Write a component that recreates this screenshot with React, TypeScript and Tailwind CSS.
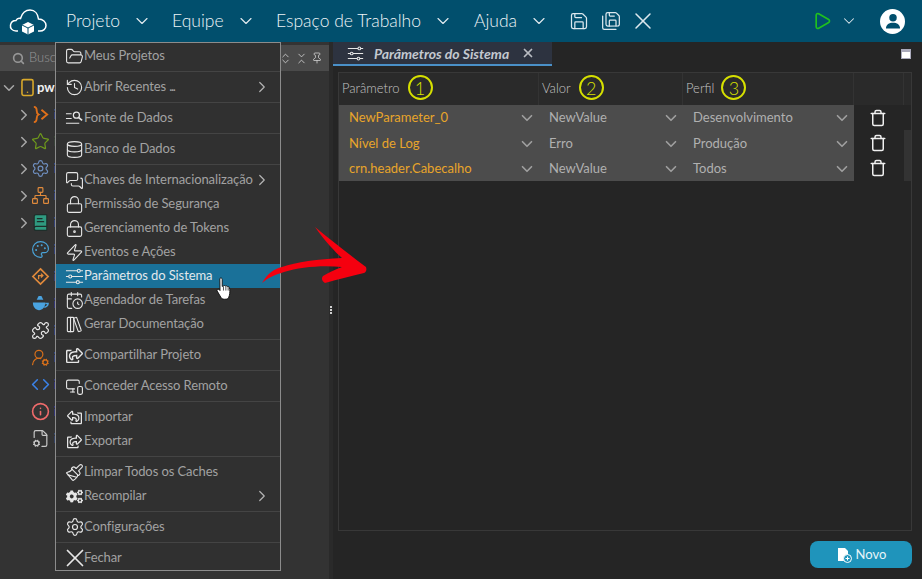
import React from "react";
import {
  ChevronDown, ChevronRight, Search, FolderOpen, History, Database, MessagesSquare, Lock, Zap,
  CalendarClock, LibraryBig, MonitorSmartphone, Paintbrush, Settings, X, Save, SaveAll, Play, Trash,
  Smartphone, Star, Network, BookText, Palette, Puzzle, Code, Info, FileCog, UserRoundCog, LockKeyhole, Pin, ChevronsDownUp, ChevronsUpDown, Locate,
} from "lucide-react";
import { FaCogs, FaRegShareSquare } from "react-icons/fa";

const F = "font-['Lato','Noto_Sans',sans-serif]";

function Sliders({ size = 18, className = "" }: { size?: number; className?: string }) {
  return (
    <svg viewBox="0 0 20 20" width={size} height={size} className={className} fill="none" stroke="currentColor" strokeWidth="1.2">
      <path d="M1 4 H13 M16 4 H19 M1 10 H4 M7 10 H19 M1 16 H12 M15 16 H19" />
      <circle cx="14.5" cy="4" r="1.6" />
      <circle cx="5.5" cy="10" r="1.6" />
      <circle cx="13.5" cy="16" r="1.6" />
    </svg>
  );
}

function ListSearch({ size = 18, className = "" }: { size?: number; className?: string }) {
  return (
    <svg viewBox="0 0 20 20" width={size} height={size} className={className} fill="none" stroke="currentColor" strokeWidth="1.3">
      <path d="M1 5 H7 M1 10 H7 M1 15 H15" />
      <circle cx="12" cy="6.5" r="3.2" />
      <path d="M14.5 9 L18 12" strokeWidth="1.8" />
    </svg>
  );
}

const Imp = (p: { size?: number; className?: string }) => <FaRegShareSquare size={p.size} className={`-scale-x-100 ${p.className}`} />;
const Exp = (p: { size?: number; className?: string }) => <FaRegShareSquare size={p.size} className={p.className} />;

type MI = { icon: React.ElementType; size?: number; label: React.ReactNode; key: string; sub?: boolean; active?: boolean };
const groups: MI[][] = [
  [{ icon: FolderOpen, key: "a", label: "Meus Projetos" }],
  [{ icon: History, key: "b", label: <>Abrir Recentes <span className="tracking-[-1.4px]">...</span></>, sub: true }],
  [{ icon: ListSearch, key: "c", label: "Fonte de Dados" }],
  [{ icon: Database, key: "d", label: "Banco de Dados" }],
  [
    { icon: MessagesSquare, key: "e", label: "Chaves de Internacionalização", sub: true },
    { icon: Lock, key: "f", label: "Permissão de Segurança" },
    { icon: LockKeyhole, key: "g", label: "Gerenciamento de Tokens" },
    { icon: Zap, key: "h", label: "Eventos e Ações" },
    { icon: Sliders, key: "i", label: "Parâmetros do Sistema", active: true },
    { icon: CalendarClock, key: "j", label: "Agendador de Tarefas" },
    { icon: LibraryBig, key: "k", label: "Gerar Documentação" },
  ],
  [{ icon: Exp, size: 17, key: "l", label: "Compartilhar Projeto" }],
  [{ icon: MonitorSmartphone, key: "m", label: "Conceder Acesso Remoto" }],
  [
    { icon: Imp, size: 15, key: "n", label: "Importar" },
    { icon: Exp, size: 15, key: "o", label: "Exportar" },
  ],
  [
    { icon: Paintbrush, key: "p", label: "Limpar Todos os Caches" },
    { icon: FaCogs, size: 17, key: "q", label: "Recompilar", sub: true },
  ],
  [{ icon: Settings, size: 20, key: "r", label: "Configurações" }],
  [{ icon: X, size: 30, key: "s", label: "Fechar" }],
];

function Braces({ size = 19, className = "" }: { size?: number; className?: string }) {
  return (
    <svg viewBox="0 0 20 20" width={size} height={size} className={className} fill="none" stroke="currentColor" strokeWidth="2">
      <path d="M3 2 C6 2 6 4 6 6 C6 8 6 9 8 10 C6 11 6 12 6 14 C6 16 6 18 3 18" />
      <path d="M11 5 L17 10 L11 15" />
    </svg>
  );
}
function Turn({ size = 19, className = "" }: { size?: number; className?: string }) {
  return (
    <svg viewBox="0 0 20 20" width={size} height={size} className={className} fill="none" stroke="currentColor" strokeWidth="1.8">
      <path d="M10 2 L18 10 L10 18 L2 10 Z" />
      <path d="M8 13 V9 H12 M10.5 7 L12.5 9 L10.5 11" strokeWidth="1.4" />
    </svg>
  );
}
function Pot({ size = 19, className = "" }: { size?: number; className?: string }) {
  return (
    <svg viewBox="0 0 20 20" width={size} height={size} className={className} fill="currentColor">
      <path d="M8 2 h3 l2 4 H6 z" />
      <path d="M2 9 H15 C15 14 12 17 8.5 17 C5 17 2 14 2 9 Z" />
      <path d="M15 10 h3 c0 2 -2 4 -4 4" fill="none" stroke="currentColor" strokeWidth="1.5" />
    </svg>
  );
}

const tree: { icon: React.ElementType; color: string; chev?: boolean; text: string; sw?: number; fill?: string }[] = [
  { icon: Braces, color: "text-[#e0701a]", chev: true, text: "text-[#3b9fd8]" },
  { icon: Star, color: "text-[#6f9a1c]", chev: true, text: "text-[#d9a441]" },
  { icon: Settings, color: "text-[#6f8fc0]", chev: true, text: "text-[#3b9fd8]" },
  { icon: Network, color: "text-[#e08a3c]", chev: true, text: "text-[#3b9fd8]" },
  { icon: BookText, color: "text-[#1e2e2a]", chev: true, text: "text-[#3b9fd8]", fill: "#2f9a80" },
  { icon: Palette, color: "text-[#4aa3d8]", text: "text-[#3b9fd8]" },
  { icon: Turn, color: "text-[#e08a3c]", text: "text-[#3b9fd8]" },
  { icon: Pot, color: "text-[#4aa3e0]", text: "text-[#4a4ad8]" },
  { icon: Puzzle, color: "text-[#e8e8e8]", text: "text-[#3b9fd8]" },
  { icon: UserRoundCog, color: "text-[#d9701a]", text: "text-[#3b9fd8]" },
  { icon: Code, color: "text-[#3b82e8]", text: "text-[#4a4ad8]", sw: 2 },
  { icon: Info, color: "text-[#ef6b6b]", text: "text-[#4a4ad8]", sw: 2 },
  { icon: FileCog, color: "text-[#c8c8c8]", text: "text-[#aaaaaa]" },
];

const rows = [
  ["NewParameter_0", "NewValue", "Desenvolvimento"],
  ["Nível de Log", "Erro", "Produção"],
  ["crn.header.Cabecalho", "NewValue", "Todos"],
];

function TopItem({ label, w, gap }: { label: string; w: number; gap: number }) {
  return (
    <div className="flex items-center" style={{ width: w }}>
      <span className="text-[17.5px] font-light text-[#eef4f7]">{label}</span>
      <ChevronDown className="shrink-0 text-[#dfe9ee]" size={20} strokeWidth={1.4} style={{ marginLeft: gap }} />
    </div>
  );
}

function Num({ n, ml }: { n: number; ml: number }) {
  return (
    <span
      className="-mt-[3px] flex h-[25px] w-[25px] items-center justify-center rounded-full border-[2.5px] border-[#d6e000] text-[18px] leading-none text-[#d6e000]"
      style={{ marginLeft: ml }}
    >
      {n}
    </span>
  );
}

export default function App() {
  return (
    <div className={`${F} relative flex h-[579px] w-[922px] flex-col overflow-hidden bg-[#252525]`}>
      {/* top bar */}
      <header className="flex h-[42px] shrink-0 items-center bg-[#014f6d]">
        <svg viewBox="0 0 38 28" className="ml-[9px] h-[28px] w-[38px]" fill="none" stroke="#fff" strokeWidth="1.5">
          <path d="M9 24 H7 C3 24 1 21 1.5 18 C2 15 4.5 13.5 7 13.5 C8 11.5 10 11 11.5 11.5 C13 6 17 3 21 3 C26 3 29 7 29.5 12 C34 12 37 15 37 18.5 C37 22 34 24 31 24 H29" />
          <path d="M19 15 l6 3 v6.5 l-6 3 l-6 -3 v-6.5 z" fill="#fff" stroke="none" />
          <path d="M13 18 l6 3 l6 -3 M19 21 v6.5" stroke="#014f6d" strokeWidth="1" />
        </svg>
        <div className="ml-[19px] flex items-center">
          <TopItem label="Projeto" w={106} gap={12} />
          <TopItem label="Equipe" w={104} gap={12} />
          <TopItem label="Espaço de Trabalho" w={198} gap={12} />
          <TopItem label="Ajuda" w={95} gap={12} />
        </div>
        <div className="flex items-center text-[#dce8ee]">
          <Save size={20} strokeWidth={1.5} />
          <SaveAll size={20} strokeWidth={1.5} className="ml-[12px]" />
          <X size={28} strokeWidth={1.3} className="ml-[8px]" />
        </div>
        <Play size={20} strokeWidth={2} className="ml-[155px] text-[#1fc01f]" />
        <ChevronDown size={18} strokeWidth={1.4} className="ml-[8px] text-[#dfe9ee]" />
        <div className="ml-[22px] flex h-[25px] w-[25px] items-center justify-center overflow-hidden rounded-full bg-white">
          <svg viewBox="0 0 24 24" className="h-[20px] w-[20px]" fill="#014f6d">
            <circle cx="12" cy="8" r="4.5" />
            <path d="M3.5 21 c0 -5 4 -7 8.5 -7 s8.5 2 8.5 7 z" />
          </svg>
        </div>
      </header>

      <div className="flex min-h-0 flex-1">
        {/* sidebar */}
        <aside className="flex w-[329px] shrink-0 flex-col bg-[#333333]">
          <div className="mt-[3px] flex h-[26px] items-center justify-between bg-[#4a4a4a] pl-[12px] pr-[6px]">
            <div className="flex items-center gap-[4px] text-[#979797]">
              <Search size={13} strokeWidth={3} />
              <span className="text-[13px] font-light">Buscar</span>
            </div>
            <div className="flex items-center gap-[3px] text-[#d8d8d8]">
              <Locate size={11} strokeWidth={1.5} />
              <ChevronsUpDown size={13} strokeWidth={1.5} />
              <ChevronsDownUp size={13} strokeWidth={1.5} />
              <Pin size={12} strokeWidth={1.5} />
            </div>
          </div>
          <div className="pt-[3px]">
            <div className="flex h-[27px] items-center">
              <ChevronDown size={18} strokeWidth={2} className="shrink-0 text-[#a8a8a8]" />
              <Smartphone size={19} strokeWidth={2} className="shrink-0 text-[#d9a92b]" />
              <span className="text-[13px] font-bold text-[#efefef]">pwa</span>
            </div>
            {tree.map((t, i) => {
              const I = t.icon as React.ElementType;
              return (
                <div key={i} className="flex h-[27px] items-center pl-[17px]">
                  <span className="flex w-[14px] shrink-0 justify-center">
                    {t.chev && <ChevronRight size={18} strokeWidth={2} className="shrink-0 text-[#a8a8a8]" />}
                  </span>
                  <I size={19} strokeWidth={t.sw ?? 1.5} fill={t.fill ?? "none"} className={`shrink-0 ${t.color}`} />
                  <span className={`ml-[4px] text-[13px] ${t.text}`}>item</span>
                </div>
              );
            })}
          </div>
        </aside>

        {/* splitter */}
        <div className="relative flex w-[4px] shrink-0 flex-col items-center justify-center gap-[1px] bg-[#2a2a2a] pb-[2px]">
          <span className="h-[2px] w-[2px] bg-[#cfcfcf]" />
          <span className="h-[2px] w-[2px] bg-[#cfcfcf]" />
          <span className="h-[2px] w-[2px] bg-[#cfcfcf]" />
        </div>

        {/* main */}
        <main className="flex min-w-0 flex-1 flex-col">
          <div className="flex h-[24px] items-stretch">
            <div className="flex w-[219px] items-center border-b-2 border-[#4a90c8] bg-[#2d3340] pl-[14px]">
              <Sliders size={17} className="shrink-0 text-[#e6e6e6]" />
              <span className="ml-[10px] whitespace-nowrap text-[14px] font-bold italic text-[#c4c9d0]">Parâmetros do Sistema</span>
              <X size={14} strokeWidth={3} className="ml-[12px] shrink-0 text-[#b8bcc2]" />
            </div>
            <div className="ml-auto mr-[11px] mt-[7px] h-[10px] w-[10px] border border-[#aab] border-t-[3px] bg-white" />
          </div>

          <div className="mb-[10px] ml-[5px] mr-[10px] mt-[6px] flex min-h-0 flex-1 flex-col border border-[#383838]">
            <div className="flex h-[32px] shrink-0 bg-[#2a2a2a] text-[13px] font-light text-[#c4c4c4]">
              <div className="flex w-[200px] items-center border-r border-[#333] pl-[3px]">Parâmetro<Num n={1} ml={8} /></div>
              <div className="flex w-[144px] items-center border-r border-[#333] pl-[3px]">Valor<Num n={2} ml={8} /></div>
              <div className="flex w-[171px] items-center border-r border-[#333] pl-[3px]">Perfil<Num n={3} ml={7} /></div>
              <div className="w-[50px] border-r border-[#333]" />
            </div>
            {rows.map((r, i) => (
              <div key={i} className="flex h-[25.4px] shrink-0 items-center text-[13px]">
                <div className="flex h-full w-[515px] items-center bg-[#4c4c4c] pt-[1px]">
                  <div className="flex w-[200px] items-center justify-between pl-[10px] pr-[3px] text-[#e8a52a]">
                    <span>{r[0]}</span>
                    <ChevronDown size={18} strokeWidth={2.2} className="text-[#a0a0a0]" />
                  </div>
                  <div className="flex w-[144px] items-center justify-between pl-[10px] pr-[3px] text-[#b0b0b0]">
                    <span>{r[1]}</span>
                    <ChevronDown size={18} strokeWidth={2.2} className="text-[#a0a0a0]" />
                  </div>
                  <div className="flex w-[171px] items-center justify-between pl-[10px] pr-[3px] text-[#b0b0b0]">
                    <span>{r[2]}</span>
                    <ChevronDown size={18} strokeWidth={2.2} className="text-[#a0a0a0]" />
                  </div>
                </div>
                <div className="flex w-[50px] justify-center pr-[2px]">
                  <Trash size={18} strokeWidth={2} className="text-[#f0f0f0]" />
                </div>
                <div className={`h-full flex-1 ${i > 0 ? "bg-[#333333]" : ""}`} />
              </div>
            ))}
          </div>

          <div className="mb-[11px] mr-[10px] flex justify-end">
            <button className="flex h-[27px] w-[102px] items-center justify-center gap-[4px] rounded-[8px] bg-[#1f94bb] text-[13px] text-[#e6f4f9]">
              <svg viewBox="0 0 16 16" className="h-[16px] w-[16px]">
                <path d="M2 1 h7 l3 3 v10 H2 z" fill="#fff" />
                <circle cx="11.5" cy="11.5" r="4" fill="#1f94bb" stroke="#fff" strokeWidth="1" />
                <path d="M9.5 11.5 h4 M11.5 9.5 v4" stroke="#fff" strokeWidth="1" />
              </svg>
              Novo
            </button>
          </div>
        </main>
      </div>

      {/* dropdown menu overlay */}
      <nav className="absolute left-[55px] top-[42px] w-[226px] border border-[#8c8c8c] bg-[#303030] pt-[1px] text-[13px] text-[#a2a2a2]">
        {groups.map((g, i) => (
          <div key={i} className={i > 0 ? "mt-[3px] border-t border-[#444444] pt-[3px]" : ""}>
            {g.map((m) => {
              const I = m.icon;
              return (
                <div key={m.key} className={`flex h-[24px] items-center pl-[9px] pr-[9px] ${m.active ? "bg-[#1a7199] text-[#e2e8ec]" : ""}`}>
                  <span className="flex w-[19px] shrink-0 items-center justify-center">
                    <I size={m.size ?? 19} strokeWidth={1.4} className="shrink-0 text-[#e6e6e6]" />
                  </span>
                  <span className="flex-1 whitespace-nowrap tracking-[-0.1px]">{m.label}</span>
                  {m.sub && <ChevronRight size={18} strokeWidth={1.6} className="shrink-0 text-[#b4b4b4]" />}
                </div>
              );
            })}
          </div>
        ))}
      </nav>

      {/* annotation arrow */}
      <svg viewBox="0 0 120 70" className="absolute left-[260px] top-[225px] h-[70px] w-[120px]">
        <path fill="#f5000f" d="M2 58 C8 48 14 44 22 42 C36 37 58 34 82 33 C72 24 62 12 55 2 C72 16 90 30 106 42 C107 45 106 47 104 48 C92 51 78 54 65 58 C62 56 61 53 63 51 C68 48 74 45 82 42 C62 40 40 42 24 47 C14 50 8 53 2 58 Z" />
      </svg>

      {/* hand cursor */}
      <svg viewBox="0 0 16 23" className="absolute left-[216px] top-[277px] h-[24px] w-[17px]">
        <path fill="#fff" stroke="#111" strokeWidth="0.9" d="M3.5 1.5 c1 -1 2.3 -0.5 2.3 1 V9 l1.2 -.5 c.5-.5 1.5-.5 1.8 .3 c.6-.6 1.7-.4 2 .4 c.7-.4 1.8 0 1.9 .9 c.6 2.5 .6 5 0 7.5 l-1 3 c-2 1 -5 1 -6.5 0 L1 13.5 c-.7-1.2 .6-2.4 1.7-1.6 L3.7 13 Z" />
        <path stroke="#111" strokeWidth="0.7" d="M7 9 V13 M9.3 9.2 V13 M11.5 9.7 V13" />
      </svg>
    </div>
  );
}
